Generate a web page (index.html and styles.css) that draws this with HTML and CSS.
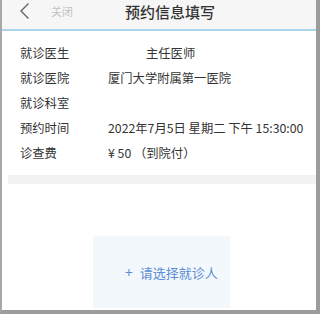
FILE: index.html
```html
<!doctype html>
<html lang="zh-CN">
<head>
    <meta charset="UTF-8">
    <title>预约信息填写</title>
    <link rel="stylesheet" href="styles.css">
</head>
<body>
<div class="frame">
    <div class="head">
        <a href="javascript:;" class="back">
            <svg width="11" height="16" viewBox="0 0 11 16">
                <path d="M9.5 0.5 L2 8 L9.5 15.5" fill="none" stroke="#666" stroke-width="1.4"/>
            </svg>
        </a>
        <a href="javascript:;" class="close">关闭</a>
        <h1 class="title">预约信息填写</h1>
    </div>

    <!--预约信息-->
    <ul class="info">
        <li><span class="label">就诊医生</span><span class="val doctor">主任医师</span></li>
        <li><span class="label">就诊医院</span><span class="val">厦门大学附属第一医院</span></li>
        <li><span class="label">就诊科室</span><span class="val"></span></li>
        <li><span class="label">预约时间</span><span class="val">2022年7月5日 星期二 下午 15:30:00</span></li>
        <li><span class="label">诊查费</span><span class="val">¥ 50 （到院付）</span></li>
    </ul>

    <div class="band"></div>

    <a href="javascript:;" class="pick"><span class="plus">+</span>请选择就诊人</a>
</div>
</body>
</html>
```

FILE: styles.css
```css
html, body, ul, h1 {
    margin: 0;
    padding: 0;
}

a {
    text-decoration: none;
}

li {
    list-style: none;
}

body {
    font-family: "Noto Sans CJK SC", "Noto Sans", sans-serif;
    background: #fff;
}

.frame {
    width: 320px;
    height: 314px;
    box-sizing: border-box;
    border-left: 2px solid #a8a8a8;
    border-right: 4px solid #9c9c9c;
    border-bottom: 4px solid #9c9c9c;
    display: flex;
    flex-direction: column;
    overflow: hidden;
}

.head {
    height: 31px;
    box-sizing: border-box;
    padding: 0 0 7px 17px;
    display: flex;
    align-items: center;
    background-color: #f6f6f6;
    border-bottom: 2px solid #a9d4ea;
    flex-shrink: 0;
}

.back {
    display: flex;
    width: 11px;
}

.close {
    margin-left: 21px;
    font-size: 11px;
    color: #c2c2c2;
}

.title {
    margin-left: 52px;
    font-size: 15px;
    font-weight: 500;
    color: #333;
}

.info {
    padding-top: 9px;
}

.info li {
    height: 25px;
    display: flex;
    align-items: center;
    padding-left: 18px;
    font-size: 12.3px;
    color: #333;
}

.label {
    width: 88px;
}

.doctor {
    padding-left: 38px;
}

.band {
    height: 9px;
    margin: 10px 0 0 6px;
    background-color: #f2f2f2;
    flex-shrink: 0;
}

.pick {
    width: 137px;
    height: 72px;
    margin: 52px 0 0 91px;
    box-sizing: border-box;
    padding-left: 32px;
    display: flex;
    align-items: center;
    background-color: #f3f8fd;
    font-size: 13px;
    color: #5b8dd3;
}

.plus {
    font-size: 14px;
    margin-right: 7px;
}
```
